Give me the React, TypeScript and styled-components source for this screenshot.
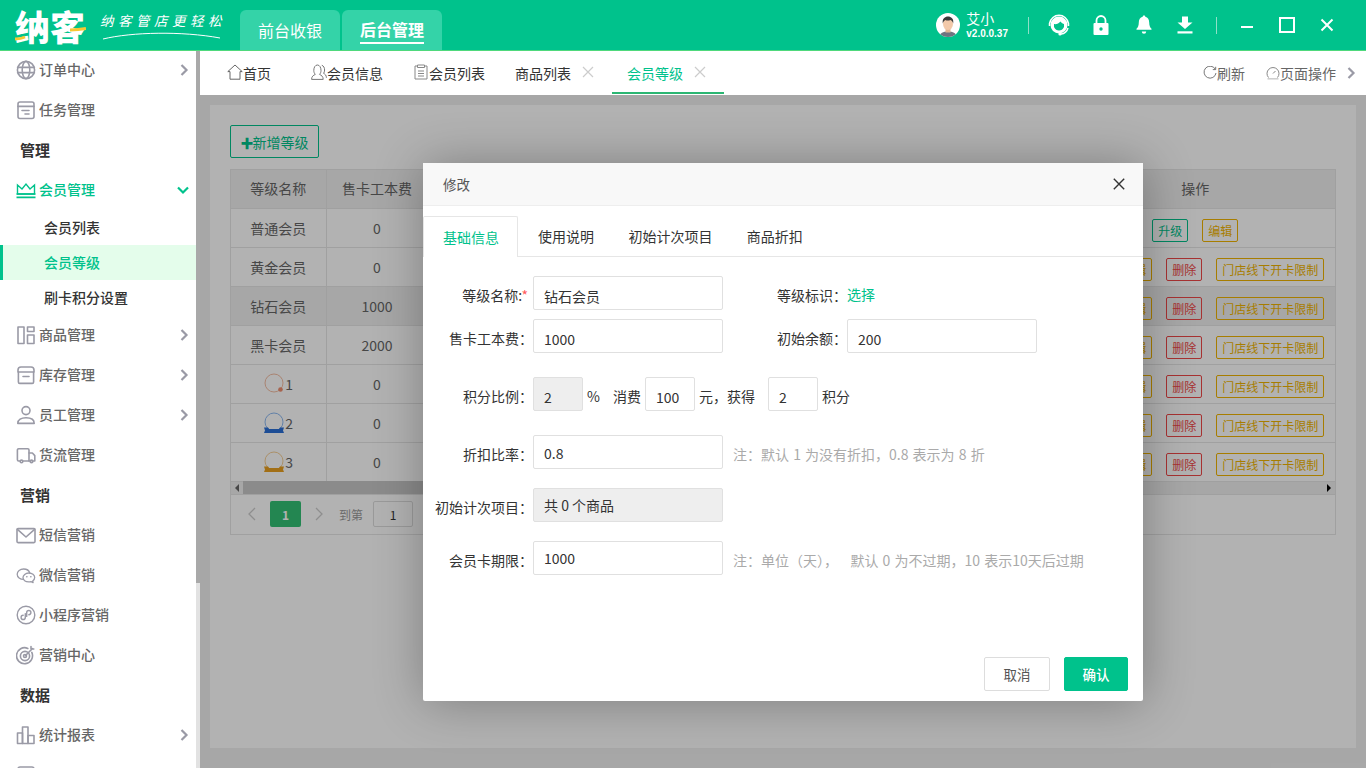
import React from "react";
import styled, { createGlobalStyle } from "styled-components";

const GREEN = "#00c28c";

const Global = createGlobalStyle`
  * { box-sizing: border-box; }
  html, body { margin: 0; padding: 0; height: 100%; overflow: hidden; }
  body {
    font-family: "Noto Sans CJK SC", "Liberation Sans", sans-serif;
    font-size: 14px;
    color: #333;
    background: #fff;
  }
`;

type IconProps = { size?: number };

const Svg = ({ size = 20, children, box = 20 }: IconProps & { children: React.ReactNode; box?: number }) => (
  <svg width={size} height={size} viewBox={`0 0 ${box} ${box}`} fill="none" stroke="currentColor" strokeWidth="1.6" strokeLinecap="round" strokeLinejoin="round">
    {children}
  </svg>
);

const GlobeIcon = () => (
  <Svg>
    <circle cx="10" cy="10" r="8.6" />
    <ellipse cx="10" cy="10" rx="3.8" ry="8.6" />
    <path d="M1.6 7.4h16.8M1.6 12.6h16.8" />
  </Svg>
);
const TaskIcon = () => (
  <Svg>
    <rect x="2" y="2" width="16" height="16.5" rx="2" />
    <path d="M2 6.4h16M6 10.5h7M9 14h4" />
  </Svg>
);
const CrownIcon = () => (
  <Svg>
    <path d="M1.5 14V5l4.5 4 4-5 4 5 4.5-4v9z" fill="none" strokeWidth="1.4" strokeLinecap="butt" strokeLinejoin="miter" />
    <path d="M.5 14h19M.5 17.4h19" strokeWidth="1.6" strokeLinecap="butt" />
  </Svg>
);
const GoodsIcon = () => (
  <Svg>
    <rect x="2" y="2" width="6" height="16.5" />
    <rect x="11.5" y="2" width="6.5" height="4.5" />
    <rect x="11.5" y="10" width="6.5" height="8.5" />
  </Svg>
);
const StockIcon = () => (
  <Svg>
    <path d="M5 2h10a3 3 0 0 1 3 3v2H2V5a3 3 0 0 1 3-3z" />
    <path d="M2.4 7v10a1.4 1.4 0 0 0 1.400 1.400h12.400a1.400 1.400 0 0 0 1.400-1.400V7M7 11.500h6" />
  </Svg>
);
const StaffIcon = () => (
  <Svg>
    <circle cx="10" cy="5.6" r="4" />
    <path d="M1.8 18.4c0-3.8 3.4-5.6 8.2-5.6s8.2 1.8 8.2 5.6z" />
  </Svg>
);
const TruckIcon = () => (
  <Svg>
    <path d="M4 16H2.6a1.2 1.2 0 0 1-1.2-1.2V5a1.2 1.2 0 0 1 1.2-1.2h9.2A1.2 1.2 0 0 1 13 5v11H7" />
    <path d="M13 8h3.4l2.4 2.6V16h-2M15 16h-2" />
    <circle cx="5.5" cy="16.4" r="1.3" />
    <circle cx="15.5" cy="16.4" r="1.3" />
  </Svg>
);
const MailIcon = () => (
  <Svg>
    <rect x="1" y="3.6" width="18" height="14" rx="1" />
    <path d="M1.4 4.4l8.6 7.6 8.6-7.6" />
  </Svg>
);
const ChatIcon = () => (
  <Svg>
    <path d="M7.6 14.4c-3.5 0-6.4-2.3-6.4-5.2S4.100 4 7.600 4c3 0 5.500 1.700 6.200 4" strokeWidth="1.3" />
    <path d="M12.800 8c3.300 0 5.900 2.100 5.900 4.600 0 1.400-.8 2.600-2 3.400l.4 1.700-2-1.100c-.7.200-1.500.300-2.300.300-3.300 0-5.800-1.900-5.800-4.300S9.500 8 12.800 8z" strokeWidth="1.3" />
    <path d="M10.800 11.800h.1M14.800 11.800h.1" />
  </Svg>
);
const MiniIcon = () => (
  <Svg>
    <circle cx="10" cy="10" r="8.800" strokeWidth="1.400" />
    <path d="M9.300 8.600v3.800a2.100 2.100 0 1 1-2.100-2.100M10.700 11.400V7.600a2.100 2.100 0 1 1 2.100 2.100" strokeWidth="1.400" />
  </Svg>
);
const TargetIcon = () => (
  <Svg>
    <path d="M15.800 7.400a8 8 0 1 1-4-4" />
    <circle cx="9" cy="11" r="4.600" />
    <circle cx="9" cy="11" r="1.500" />
    <path d="M9.500 10.500l7-7M15 1.500v2.500h2.800" />
  </Svg>
);
const ChartIcon = () => (
  <Svg>
    <rect x="1.500" y="8" width="5" height="10.500" />
    <rect x="6.500" y="2" width="5.500" height="16.500" />
    <rect x="12" y="10.500" width="6" height="8" />
  </Svg>
);

const HomeTabIcon = () => (
  <svg width="16" height="16" viewBox="0 0 16 16" fill="none" stroke="#666" strokeWidth="1">
    <path d="M.8 7.600L8 1l7.200 6.600H13v7.600H3V7.600z" />
  </svg>
);
const PersonTabIcon = () => (
  <svg width="16" height="16" viewBox="0 0 16 16" fill="none" stroke="#777" strokeWidth="1">
    <path d="M.6 15.400c0-3 1.700-4 3.700-5-1-1-1.500-2.400-1.500-4 0-3 1.400-5.400 3.600-5.400s3.600 2.400 3.600 5.400c0 1.600-.5 3-1.500 4 2 1 3.700 2 3.700 5z" />
    <path d="M10.800 1.300c1.800.4 2.800 2.500 2.800 4.700 0 1.300-.4 2.500-1 3.400 1.500.7 2.800 1.900 2.800 4.400" />
  </svg>
);
const ClipTabIcon = () => (
  <svg width="15" height="16" viewBox="0 0 15 16" fill="none" stroke="#888" strokeWidth="1">
    <path d="M3.500 2H1v13h12V2h-2.500" />
    <path d="M3.500 1h7v2.500h-7zM4 7h6M4 9.500h6M4 12h6" />
  </svg>
);
const CloseMark = () => (
  <svg width="12" height="12" viewBox="0 0 12 12" stroke="#ccc" strokeWidth="1.200">
    <path d="M1 1l10 10M11 1L1 11" />
  </svg>
);
const RefreshIcon = () => (
  <svg width="14" height="14" viewBox="0 0 14 14" fill="none" stroke="#777" strokeWidth="1">
    <path d="M12.400 3.400A6 6 0 1 0 13 7" />
    <path d="M9.800 3.600h2.900V.8" />
  </svg>
);
const GaugeIcon = () => (
  <svg width="14" height="14" viewBox="0 0 14 14" fill="none" stroke="#888" strokeWidth="1">
    <path d="M2.500 11.500a6 6 0 1 1 9 0" />
    <path d="M7 7.500l2.500-2.500" />
    <path d="M1.500 12.800h11" stroke="#ccc" strokeWidth="1.500" />
  </svg>
);
const Chevron = ({ color = "#9a9aa6" }: { color?: string }) => (
  <svg width="9" height="12" viewBox="0 0 9 12" fill="none" stroke={color} strokeWidth="2.200">
    <path d="M1.500 1l5 5-5 5" />
  </svg>
);

const HeadsetIcon = () => (
  <svg width="22" height="22" viewBox="0 0 22 22" fill="none">
    <circle cx="11" cy="11" r="8.500" fill="#fff" />
    <path d="M6 10c2 .5 5-.5 6.500-2.500 1 1.500 2.500 2.300 3.500 2.500v3c-1 2.500-3 3.500-5 3.500S7 15.500 6 13z" fill={GREEN} />
    <path d="M1.500 12V9.500C2.500 4.500 6.500 1.200 11 1.200s8.500 3.300 9.500 8.300V12M20 14c-1 3.500-3.500 5.600-7 6" stroke="#fff" strokeWidth="1.500" />
    <circle cx="12" cy="20" r="1.600" fill="#fff" />
  </svg>
);
const LockIcon = () => (
  <svg width="16" height="20" viewBox="0 0 16 20" fill="none">
    <path d="M3.500 9V5.500a4.500 4.500 0 0 1 9 0V9" stroke="#fff" strokeWidth="1.800" />
    <rect x=".5" y="8" width="15" height="12" rx="1" fill="#fff" />
    <circle cx="8" cy="14" r="1.700" fill={GREEN} />
  </svg>
);
const BellIcon = () => (
  <svg width="16" height="20" viewBox="0 0 16 20" fill="#fff">
    <path d="M8 .5c.8 0 1.300.5 1.300 1.200 2.600.7 3.900 3 3.900 5.800 0 3 .8 5 2.300 6.300v1H.5v-1C2 12.500 2.800 10.500 2.800 7.500c0-2.800 1.300-5.100 3.900-5.800C6.700 1 7.200.5 8 .5z" />
    <path d="M5.800 16.500h4.400a2.200 2.200 0 0 1-4.400 0z" />
  </svg>
);
const DownloadIcon = () => (
  <svg width="16" height="18" viewBox="0 0 16 18" fill="#fff">
    <path d="M5 .5h6v6h4.500L8 13 .5 6.500H5z" />
    <rect x=".5" y="15.300" width="15" height="2.200" />
  </svg>
);
const Avatar = () => (
  <svg width="24" height="24" viewBox="0 0 24 24">
    <defs>
      <clipPath id="avatarClip">
        <circle cx="12" cy="12" r="12" />
      </clipPath>
    </defs>
    <g clipPath="url(#avatarClip)">
      <rect width="24" height="24" fill="#fff" />
      <path d="M3 24c1-4 4-5.500 9-5.500s8 1.500 9 5.500z" fill="#6f7480" />
      <rect x="9.500" y="14" width="5" height="5.500" fill="#e2b594" />
      <ellipse cx="12" cy="11" rx="5" ry="6" fill="#f2c9aa" />
      <path d="M6.800 10.500C6 5.500 9 3.500 12 3.500s6 2 5.200 7c-.5-2-1.500-3-2.700-3.500-2 .7-4 .7-5 0-1.200.5-2.200 1.500-2.700 3.500z" fill="#3a3a3a" />
    </g>
  </svg>
);

const Ring = ({ kind }: { kind: "bronze" | "blue" | "gold" }) => {
  const ring = { bronze: "#f3bda3", blue: "#8cb8f0", gold: "#f5cf96" }[kind];
  const band = { blue: "#2a6fd6", gold: "#e8a020", bronze: "#ef8f70" }[kind];
  return (
    <svg width="22" height="22" viewBox="0 0 22 22" fill="none">
      <circle cx="11" cy="10" r="9" stroke={ring} strokeWidth="1" />
      {kind === "bronze" ? (
        <circle cx="17.500" cy="16.500" r="2.300" fill={band} />
      ) : (
        <path d="M1 15.500h4l1 1.500h10l1-1.500h4l-1 3 1 2.500H1l1-2.500z" fill={band} />
      )}
    </svg>
  );
};

const Page = styled.div`
  width: 1366px;
  height: 768px;
  display: flex;
  flex-direction: column;
  overflow: hidden;
`;

const Header = styled.header`
  height: 51px;
  flex: none;
  display: flex;
  align-items: stretch;
  background: ${GREEN};
  border-bottom: 1px solid #4fd97c;
  color: #fff;
`;

const Logo = styled.div`
  position: relative;
  width: 240px;
  padding-left: 15px;
  display: flex;
  align-items: center;
  gap: 14px;
`;

const LogoText = styled.span`
  font-size: 35px;
  line-height: 35px;
  font-weight: 900;
  letter-spacing: 0;
  width: 71px;
  white-space: nowrap;
`;

const LogoAccent = styled.svg`
  position: absolute;
  left: 14px;
  top: 24px;
`;

const Slogan = styled.div`
  position: relative;
  font-size: 13.500px;
  font-style: italic;
  letter-spacing: 4.500px;
  line-height: 18px;
  white-space: nowrap;
  margin-top: -10px;
`;

const SloganLine = styled.svg`
  position: absolute;
  left: 2px;
  top: 20px;
`;

const NavTabs = styled.nav`
  display: flex;
  gap: 2px;
  padding-top: 10px;
`;

const NavTab = styled.div<{ $active?: boolean }>`
  width: 100px;
  background: #34d3a8;
  border-radius: 6px 6px 0 0;
  display: flex;
  align-items: center;
  justify-content: center;
  font-size: 16px;
  font-weight: ${(p) => (p.$active ? 700 : 400)};
  span {
    padding-bottom: ${(p) => (p.$active ? "1px" : "0")};
    line-height: 23px;
    border-bottom: ${(p) => (p.$active ? "2px solid #fff" : "0")};
    margin-top: ${(p) => (p.$active ? "2px" : "0")};
  }
`;

const HeaderRight = styled.div`
  margin-left: auto;
  display: flex;
  align-items: center;
  padding-right: 19px;
`;

const UserBox = styled.div`
  display: flex;
  align-items: center;
  gap: 6px;
  margin-right: 20px;
`;

const UserText = styled.div`
  display: flex;
  flex-direction: column;
  line-height: 16px;
  padding-top: 2px;
`;

const UserName = styled.span`
  font-size: 14px;
`;

const Version = styled.span`
  font-size: 10px;
  font-weight: 700;
  font-family: "Liberation Sans", sans-serif;
`;

const Sep = styled.i<{ $l?: number; $r?: number }>`
  width: 1px;
  height: 17px;
  background: #8fe0c8;
  margin: 0 ${(p) => p.$r ?? 0}px 0 ${(p) => p.$l ?? 0}px;
`;

const HeadIcon = styled.div<{ $w: number }>`
  width: ${(p) => p.$w}px;
  display: flex;
  justify-content: center;
  align-items: center;
`;

const WinBtn = styled.div`
  width: 40px;
  display: flex;
  justify-content: center;
  align-items: center;
`;

const Body = styled.div`
  flex: 1;
  min-height: 0;
  display: flex;
`;

const Sidebar = styled.aside`
  width: 200px;
  flex: none;
  display: flex;
  overflow: hidden;
`;

const SideList = styled.div`
  width: 196px;
  margin-top: -1px;
`;

const SideTrack = styled.div`
  width: 4px;
  background: #e2e2e2;
`;

const SideThumb = styled.div`
  height: 532px;
  background: #a9a9a9;
`;

const SideRow = styled.div<{ $active?: boolean }>`
  height: 40px;
  display: flex;
  align-items: center;
  padding: 0 7px 0 16px;
  gap: 3px;
  color: ${(p) => (p.$active ? GREEN : "#666")};
  font-weight: 500;
  svg:first-child {
    color: ${(p) => (p.$active ? GREEN : "#9a9aa6")};
    flex: none;
  }
`;

const SideLabel = styled.span`
  flex: 1;
  white-space: nowrap;
  padding-bottom: 2px;
`;

const SideGroup = styled.div`
  height: 40px;
  display: flex;
  align-items: center;
  padding: 0 0 2px 20px;
  font-size: 15px;
  font-weight: 700;
  color: #333;
`;

const SubRow = styled.div<{ $active?: boolean }>`
  height: 35px;
  display: flex;
  align-items: center;
  padding-left: ${(p) => (p.$active ? "41px" : "44px")};
  padding-bottom: 2px;
  font-weight: 500;
  color: ${(p) => (p.$active ? GREEN : "#333")};
  background: ${(p) => (p.$active ? "#e4fdeb" : "transparent")};
  border-left: ${(p) => (p.$active ? `3px solid ${GREEN}` : "0")};
`;

const Main = styled.main`
  flex: 1;
  min-width: 0;
  display: flex;
  flex-direction: column;
`;

const TabBar = styled.div`
  height: 44px;
  flex: none;
  display: flex;
  align-items: stretch;
  padding: 0 10px 0 12px;
  background: #fff;
`;

const Tab = styled.div<{ $active?: boolean; $w: number }>`
  width: ${(p) => p.$w}px;
  padding: 2px 0 0 15px;
  margin-bottom: 1px;
  display: flex;
  align-items: center;
  gap: 0;
  color: ${(p) => (p.$active ? GREEN : "#333")};
  border-bottom: 2px solid ${(p) => (p.$active ? "#2bb673" : "transparent")};
  white-space: nowrap;
  svg { flex: none; margin-top: -2px; }
`;

const TabClose = styled.span`
  display: flex;
  margin-left: 11px;
`;

const TabTools = styled.div`
  margin-left: auto;
  display: flex;
  align-items: center;
  color: #666;
`;

const ToolItem = styled.div`
  display: flex;
  align-items: center;
  margin-right: 21px;
  white-space: nowrap;
`;

const ToolArrow = styled.div`
  display: flex;
  margin-left: -10px;
`;

const Content = styled.div`
  position: relative;
  flex: 1;
  min-height: 0;
  background: #f0f0f0;
  padding: 10px 10px 20px;
  display: flex;
`;

const Panel = styled.section`
  flex: 1;
  min-width: 0;
  background: #fff;
  padding: 20px;
`;

const AddButton = styled.button`
  height: 33px;
  width: 89px;
  padding: 1px 0 0;
  display: flex;
  align-items: center;
  justify-content: center;
  background: #fff;
  color: ${GREEN};
  border: 1px solid ${GREEN};
  border-radius: 2px;
  font: inherit;
  white-space: nowrap;
`;

const PlusMark = styled.b`
  font-size: 13px;
  line-height: 13px;
  margin-right: -1px;
`;

const TableBox = styled.div`
  width: 1106px;
  margin-top: 11px;
  border: 1px solid #e6e6e6;
`;

const Table = styled.table`
  width: 100%;
  border-collapse: collapse;
  table-layout: fixed;
  color: #666;
`;

const Th = styled.th<{ $w?: number }>`
  height: 38px;
  width: ${(p) => (p.$w ? `${p.$w}px` : "auto")};
  background: #f0f0f0;
  border-right: 1px solid #e6e6e6;
  border-bottom: 1px solid #e6e6e6;
  font-weight: 400;
  text-align: center;
  padding: 0 0 2px;
  &:last-child { border-right: 0; }
`;

const Tr = styled.tr<{ $hover?: boolean }>`
  background: ${(p) => (p.$hover ? "#f0f0f0" : "#fff")};
`;

const Td = styled.td`
  height: 39px;
  border-right: 1px solid #e6e6e6;
  border-bottom: 1px solid #e6e6e6;
  text-align: center;
  padding: 0;
  &:last-child { border-right: 0; }
`;

const RingCell = styled.div`
  display: flex;
  align-items: center;
  justify-content: center;
  gap: 0;
`;

const Actions = styled.div`
  display: flex;
  justify-content: center;
  gap: 14px;
  padding-top: 5px;
`;

const ActBtn = styled.span<{ $color: string }>`
  height: 23px;
  padding: 0 5px;
  display: inline-flex;
  align-items: center;
  font-size: 12px;
  color: ${(p) => p.$color};
  border: 1px solid ${(p) => p.$color};
  border-radius: 2px;
  white-space: nowrap;
`;

const HScroll = styled.div`
  height: 13px;
  display: flex;
  align-items: center;
  background: #f0f0f0;
  border-bottom: 1px solid #e6e6e6;
`;

const ArrowBox = styled.div<{ $right?: boolean }>`
  width: 12px;
  flex: none;
  display: flex;
  justify-content: center;
  i {
    border-top: 4px solid transparent;
    border-bottom: 4px solid transparent;
    ${(p) => (p.$right ? "border-left: 4px solid #000;" : "border-right: 4px solid #666;")}
  }
`;

const HThumb = styled.div`
  width: 800px;
  height: 13px;
  background: #c8c8c8;
`;

const Spacer = styled.div`
  flex: 1;
`;

const Pager = styled.div`
  height: 39px;
  display: flex;
  align-items: center;
  padding-left: 16px;
  color: #999;
  font-size: 12px;
`;

const PagerCurrent = styled.div`
  width: 31px;
  height: 26px;
  margin: 0 13px;
  display: flex;
  align-items: center;
  justify-content: center;
  color: #fff;
  background: #33c175;
  border-radius: 2px;
  font-weight: 700;
`;

const PagerInput = styled.div`
  width: 40px;
  height: 26px;
  margin-left: 10px;
  display: flex;
  align-items: center;
  justify-content: center;
  border: 1px solid #ddd;
  border-radius: 2px;
  color: #333;
`;

const PagerGoto = styled.span`
  margin-left: 15px;
`;

const Mask = styled.div`
  position: absolute;
  inset: 0;
  background: rgba(0, 0, 0, 0.3);
  display: flex;
  align-items: center;
  justify-content: center;
`;

const Modal = styled.div`
  width: 720px;
  height: 538px;
  background: #fff;
  border-radius: 2px;
  box-shadow: 1px 1px 50px rgba(0, 0, 0, 0.3);
  display: flex;
  flex-direction: column;
`;

const ModalTitle = styled.div`
  height: 43px;
  flex: none;
  display: flex;
  align-items: center;
  justify-content: space-between;
  padding: 0 18px 0 20px;
  background: #f8f8f8;
  border-bottom: 1px solid #eee;
  color: #555;
  font-size: 13.500px;
`;

const ModalTabs = styled.div`
  margin-top: 10px;
  height: 41px;
  flex: none;
  display: flex;
  border-bottom: 1px solid #e6e6e6;
`;

const ModalTab = styled.div<{ $active?: boolean }>`
  height: 41px;
  padding: 0 ${(p) => (p.$active ? 18 : 14.400)}px 0 ${(p) => (p.$active ? 19 : 20)}px;
  display: flex;
  align-items: center;
  color: ${(p) => (p.$active ? GREEN : "#333")};
  background: ${(p) => (p.$active ? "#fff" : "transparent")};
  border: ${(p) => (p.$active ? "1px solid #e6e6e6" : "0")};
  border-bottom: 0;
  border-radius: 2px 2px 0 0;
  white-space: nowrap;
`;

const Form = styled.div`
  flex: 1;
  padding-top: 19px;
`;

const Row = styled.div<{ $top?: number }>`
  display: flex;
  align-items: center;
  height: 34px;
  margin-top: ${(p) => p.$top ?? 0}px;
`;

const Label = styled.label<{ $w?: number }>`
  width: ${(p) => p.$w ?? 110}px;
  flex: none;
  padding-top: 4px;
  text-align: right;
  white-space: nowrap;
  color: #333;
`;

const Required = styled.em`
  color: #ff5a5a;
  font-style: normal;
  margin-right: 5px;
`;

const Input = styled.input<{ $w?: number; $gray?: boolean; $low?: number }>`
  width: ${(p) => p.$w ?? 190}px;
  height: 34px;
  flex: none;
  padding: ${(p) => p.$low ?? 0}px 5px 0 10px;
  border: 1px solid #e0e0e0;
  border-radius: 2px;
  background: ${(p) => (p.$gray ? "#eee" : "#fff")};
  color: #333;
  font: inherit;
  outline: none;
`;

const Unit = styled.span<{ $l?: number; $r?: number }>`
  margin: 0 ${(p) => p.$r ?? 0}px 0 ${(p) => p.$l ?? 0}px;
  padding-top: 4px;
  white-space: nowrap;
`;

const Note = styled.span`
  margin-left: 10px;
  padding-top: 4px;
  color: #aaa;
  word-spacing: 1px;
  white-space: nowrap;
`;

const PickLink = styled.a`
  color: ${GREEN};
  padding-top: 2px;
`;

const Footer = styled.div`
  flex: none;
  display: flex;
  justify-content: flex-end;
  gap: 14px;
  padding: 0 15px 10px;
`;

const FootButton = styled.button<{ $primary?: boolean }>`
  height: 34px;
  width: ${(p) => (p.$primary ? 64 : 66)}px;
  padding: 0;
  font: inherit;
  font-size: 13.500px;
  font-weight: ${(p) => (p.$primary ? 500 : 400)};
  color: ${(p) => (p.$primary ? "#fff" : "#555")};
  background: ${(p) => (p.$primary ? GREEN : "#fff")};
  border: 1px solid ${(p) => (p.$primary ? GREEN : "#ddd")};
  border-radius: 2px;
`;

const CloseBtn = styled.span`
  display: flex;
`;

type SideItem =
  | { kind: "group"; label: string }
  | { kind: "sub"; label: string; active?: boolean }
  | { kind: "row"; label: string; icon: React.ReactNode; arrow?: boolean; active?: boolean; open?: boolean };

const sideItems: SideItem[] = [
  { kind: "row", label: "订单中心", icon: <GlobeIcon />, arrow: true },
  { kind: "row", label: "任务管理", icon: <TaskIcon /> },
  { kind: "group", label: "管理" },
  { kind: "row", label: "会员管理", icon: <CrownIcon />, active: true, open: true },
  { kind: "sub", label: "会员列表" },
  { kind: "sub", label: "会员等级", active: true },
  { kind: "sub", label: "刷卡积分设置" },
  { kind: "row", label: "商品管理", icon: <GoodsIcon />, arrow: true },
  { kind: "row", label: "库存管理", icon: <StockIcon />, arrow: true },
  { kind: "row", label: "员工管理", icon: <StaffIcon />, arrow: true },
  { kind: "row", label: "货流管理", icon: <TruckIcon /> },
  { kind: "group", label: "营销" },
  { kind: "row", label: "短信营销", icon: <MailIcon /> },
  { kind: "row", label: "微信营销", icon: <ChatIcon /> },
  { kind: "row", label: "小程序营销", icon: <MiniIcon /> },
  { kind: "row", label: "营销中心", icon: <TargetIcon /> },
  { kind: "group", label: "数据" },
  { kind: "row", label: "统计报表", icon: <ChartIcon />, arrow: true },
  { kind: "row", label: "", icon: <TaskIcon /> },
];

type Level = { name: React.ReactNode; fee: number; first?: boolean; hover?: boolean };

const levels: Level[] = [
  { name: "普通会员", fee: 0, first: true },
  { name: "黄金会员", fee: 0 },
  { name: "钻石会员", fee: 1000, hover: true },
  { name: "黑卡会员", fee: 2000 },
  { name: <RingCell><Ring kind="bronze" />1</RingCell>, fee: 0 },
  { name: <RingCell><Ring kind="blue" />2</RingCell>, fee: 0 },
  { name: <RingCell><Ring kind="gold" />3</RingCell>, fee: 0 },
];

const App = () => {
  return (
    <Page>
      <Global />
      <Header>
        <Logo>
          <LogoText>纳客</LogoText>
          <LogoAccent width="72" height="18" viewBox="0 0 72 18" fill="none">
            <path d="M1 15c3 0 7-.5 10-2" stroke="#f7c832" strokeWidth="3" />
            <path d="M56 6c5 0 11-.5 16-1.500" stroke="#f7c832" strokeWidth="3" />
          </LogoAccent>
          <Slogan>
            纳客管店更轻松
            <SloganLine width="120" height="10" viewBox="0 0 120 10" fill="none">
              <path d="M1 8C30 1 80 0 118 7" stroke="#fff" strokeWidth="1" />
            </SloganLine>
          </Slogan>
        </Logo>
        <NavTabs>
          <NavTab><span>前台收银</span></NavTab>
          <NavTab $active><span>后台管理</span></NavTab>
        </NavTabs>
        <HeaderRight>
          <UserBox>
            <Avatar />
            <UserText>
              <UserName>艾小</UserName>
              <Version>v2.0.0.37</Version>
            </UserText>
          </UserBox>
          <Sep />
          <HeadIcon $w={60}><HeadsetIcon /></HeadIcon>
          <HeadIcon $w={24}><LockIcon /></HeadIcon>
          <HeadIcon $w={62}><BellIcon /></HeadIcon>
          <HeadIcon $w={20}><DownloadIcon /></HeadIcon>
          <Sep $l={21} $r={10} />
          <WinBtn>
            <svg width="14" height="14" viewBox="0 0 14 14" stroke="#fff" strokeWidth="2"><path d="M1 9h12" /></svg>
          </WinBtn>
          <WinBtn>
            <svg width="16" height="16" viewBox="0 0 16 16" fill="none" stroke="#fff" strokeWidth="2"><rect x="1" y="1" width="14" height="14" /></svg>
          </WinBtn>
          <WinBtn>
            <svg width="14" height="14" viewBox="0 0 14 14" stroke="#fff" strokeWidth="2"><path d="M1.500 1.500l11 11M12.500 1.500l-11 11" /></svg>
          </WinBtn>
        </HeaderRight>
      </Header>
      <Body>
        <Sidebar>
          <SideList>
            {sideItems.map((item, i) => {
              if (item.kind === "group") return <SideGroup key={i}>{item.label}</SideGroup>;
              if (item.kind === "sub") return <SubRow key={i} $active={item.active}>{item.label}</SubRow>;
              return (
                <SideRow key={i} $active={item.active}>
                  {item.icon}
                  <SideLabel>{item.label}</SideLabel>
                  {item.arrow && <Chevron />}
                  {item.open && (
                    <svg width="12" height="9" viewBox="0 0 12 9" fill="none" stroke={GREEN} strokeWidth="2.200"><path d="M1 1.500l5 5 5-5" /></svg>
                  )}
                </SideRow>
              );
            })}
          </SideList>
          <SideTrack><SideThumb /></SideTrack>
        </Sidebar>
        <Main>
          <TabBar>
            <Tab $w={84}><HomeTabIcon />首页</Tab>
            <Tab $w={103}><PersonTabIcon />会员信息</Tab>
            <Tab $w={101}><ClipTabIcon />会员列表</Tab>
            <Tab $w={112}>商品列表<TabClose><CloseMark /></TabClose></Tab>
            <Tab $w={112} $active>会员等级<TabClose><CloseMark /></TabClose></Tab>
            <TabTools>
              <ToolItem><RefreshIcon />刷新</ToolItem>
              <ToolItem><GaugeIcon />页面操作</ToolItem>
              <ToolArrow><Chevron /></ToolArrow>
            </TabTools>
          </TabBar>
          <Content>
            <Panel>
              <AddButton><PlusMark>✚</PlusMark>新增等级</AddButton>
              <TableBox>
                <Table>
                  <thead>
                    <tr>
                      <Th $w={95}>等级名称</Th>
                      <Th $w={102}>售卡工本费</Th>
                      <Th />
                      <Th $w={280}>操作</Th>
                    </tr>
                  </thead>
                  <tbody>
                    {levels.map((lv, i) => (
                      <Tr key={i} $hover={lv.hover}>
                        <Td>{lv.name}</Td>
                        <Td>{lv.fee}</Td>
                        <Td />
                        <Td>
                          <Actions>
                            <ActBtn $color={GREEN}>升级</ActBtn>
                            <ActBtn $color="#f0b400">编辑</ActBtn>
                            {!lv.first && <ActBtn $color="#f04848">删除</ActBtn>}
                            {!lv.first && <ActBtn $color="#f0b400">门店线下开卡限制</ActBtn>}
                          </Actions>
                        </Td>
                      </Tr>
                    ))}
                  </tbody>
                </Table>
                <HScroll>
                  <ArrowBox><i /></ArrowBox>
                  <HThumb />
                  <Spacer />
                  <ArrowBox $right><i /></ArrowBox>
                </HScroll>
                <Pager>
                  <svg width="10" height="14" viewBox="0 0 10 14" fill="none" stroke="#ccc" strokeWidth="1.300"><path d="M8 1L2 7l6 6" /></svg>
                  <PagerCurrent>1</PagerCurrent>
                  <svg width="10" height="14" viewBox="0 0 10 14" fill="none" stroke="#ccc" strokeWidth="1.300"><path d="M2 1l6 6-6 6" /></svg>
                  <PagerGoto>到第</PagerGoto>
                  <PagerInput>1</PagerInput>
                </Pager>
              </TableBox>
            </Panel>
            <Mask>
              <Modal>
                <ModalTitle>
                  修改
                  <CloseBtn>
                    <svg width="12" height="12" viewBox="0 0 12 12" stroke="#333" strokeWidth="1.400"><path d="M.8.8l10.400 10.400M11.200.8L.8 11.200" /></svg>
                  </CloseBtn>
                </ModalTitle>
                <ModalTabs>
                  <ModalTab $active>基础信息</ModalTab>
                  <ModalTab>使用说明</ModalTab>
                  <ModalTab>初始计次项目</ModalTab>
                  <ModalTab>商品折扣</ModalTab>
                </ModalTabs>
                <Form>
                  <Row>
                    <Label>等级名称:<Required>*</Required></Label>
                    <Input readOnly value="钻石会员" $low={6} />
                    <Label $w={124}>等级标识：</Label>
                    <PickLink>选择</PickLink>
                  </Row>
                  <Row $top={9}>
                    <Label>售卡工本费：</Label>
                    <Input readOnly value="1000" $low={6} />
                    <Label $w={124}>初始余额：</Label>
                    <Input readOnly value="200" $low={6} />
                  </Row>
                  <Row $top={24}>
                    <Label>积分比例：</Label>
                    <Input readOnly value="2" $w={50} $gray $low={6} />
                    <Unit $l={4} $r={13}>%</Unit>
                    <Unit $r={4}>消费</Unit>
                    <Input readOnly value="100" $w={50} $low={6} />
                    <Unit $l={4} $r={13}>元，获得</Unit>
                    <Input readOnly value="2" $w={50} $low={6} />
                    <Unit $l={4}>积分</Unit>
                  </Row>
                  <Row $top={24}>
                    <Label>折扣比率：</Label>
                    <Input readOnly value="0.8" $low={2} />
                    <Note>注：默认 1 为没有折扣，0.8 表示为 8 折</Note>
                  </Row>
                  <Row $top={19}>
                    <Label>初始计次项目：</Label>
                    <Input readOnly value="共 0 个商品" $gray />
                  </Row>
                  <Row $top={19}>
                    <Label>会员卡期限：</Label>
                    <Input readOnly value="1000" />
                    <Note>注：单位（天），{"\u00a0\u00a0\u00a0"}默认 0 为不过期，10 表示10天后过期</Note>
                  </Row>
                </Form>
                <Footer>
                  <FootButton>取消</FootButton>
                  <FootButton $primary>确认</FootButton>
                </Footer>
              </Modal>
            </Mask>
          </Content>
        </Main>
      </Body>
    </Page>
  );
};

export default App;
